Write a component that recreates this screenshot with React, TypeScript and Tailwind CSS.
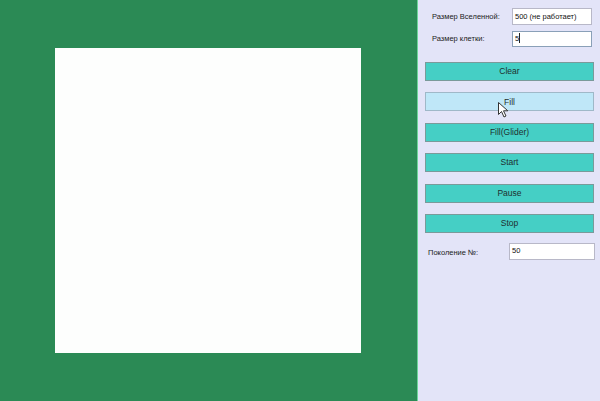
import React from "react";

const font = { fontFamily: '"Liberation Sans", Arial, sans-serif' };

function Btn({ label, hover }: { label: string; hover?: boolean }) {
  return (
    <div
      className={
        "relative h-[19px] w-[169px] flex items-center justify-center text-[8.5px] text-[#1f2f2f] border " +
        (hover ? "bg-[#bfe7f8] border-[#9fb8c8]" : "bg-[#45cfc5] border-[#7a9a9a]")
      }
    >
      {label}
      {hover && (
        <svg className="absolute left-[72px] top-[9px]" width="11" height="16" viewBox="0 0 11 16">
          <path d="M0.5 0.5 L0.5 12.5 L3.5 9.5 L6 15 L8 14 L5.5 8.8 L9.8 8.8 Z" fill="#ffffff" stroke="#333" strokeWidth="1" strokeLinejoin="round" />
        </svg>
      )}
    </div>
  );
}

export default function App() {
  return (
    <div className="w-[600px] h-[401px] flex overflow-hidden" style={font}>
      <div className="w-[417px] h-full bg-[#2b8a55] pt-[48px] pl-[55px]">
        <div className="w-[306px] h-[305px] bg-[#fdfefd]" />
      </div>
      <div className="w-px h-full bg-[#6fd49a]" />
      <div className="flex-1 h-full bg-[#e3e4f8] flex flex-col pt-[8px]">
        <div className="flex items-center h-[17px]">
          <span className="ml-[14px] w-[80px] text-[7.5px] text-[#222] whitespace-nowrap">Размер Вселенной:</span>
          <div className="w-[80px] h-[17px] bg-white border border-[#b8b8c8] text-[7.5px] text-[#111] px-[2px] pt-[2px] whitespace-nowrap overflow-hidden">
            500 (не работает)
          </div>
        </div>
        <div className="flex items-center h-[16px] mt-[6px]">
          <span className="ml-[14px] w-[80px] text-[7.5px] text-[#222] whitespace-nowrap">Размер клетки:</span>
          <div className="w-[80px] h-[16px] bg-white border border-[#8aa0b8] text-[7.5px] text-[#111] px-[2px] pt-[1px] flex items-start">
            5<span className="inline-block w-px h-[10px] bg-[#222]" />
          </div>
        </div>
        <div className="flex flex-col gap-[11.4px] mt-[15px] ml-[7px]">
          <Btn label="Clear" />
          <Btn label="Fill" hover />
          <Btn label="Fill(Glider)" />
          <Btn label="Start" />
          <Btn label="Pause" />
          <Btn label="Stop" />
        </div>
        <div className="flex items-center h-[17px] mt-[10px]">
          <span className="ml-[10px] w-[81px] text-[7.5px] text-[#222] whitespace-nowrap pt-[3px]">Поколение №:</span>
          <div className="w-[86px] h-[17px] bg-white border border-[#b8b8c8] text-[7.5px] text-[#111] px-[2px] pt-[1px]">
            50
          </div>
        </div>
      </div>
    </div>
  );
}
